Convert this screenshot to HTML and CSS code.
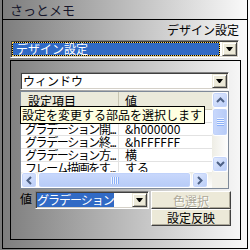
FILE: index.html
```html
<!DOCTYPE html>
<html>

<head>
    <meta charset="utf-8">
    <link rel="stylesheet" href="styles.css">
</head>

<body>
    <div class="window">
        <div class="titlebar">さっとメモ</div>
        <div class="content">
            <div class="heading">デザイン設定</div>
            <div class="combo combo-top">
                <div class="field">デザイン設定</div>
                <div class="drop"><span class="arrow"></span></div>
            </div>

            <div class="panel">
                <div class="combo combo-part">
                    <div class="field">ウィンドウ</div>
                    <div class="drop"><span class="arrow"></span></div>
                </div>

                <div class="listview">
                    <div class="lv-main">
                        <div class="lv-header">
                            <div class="c1">設定項目</div>
                            <div class="c2">値</div>
                        </div>
                        <div class="lv-row">
                            <div class="c1">ウィンドウ背景色</div>
                            <div class="c2">&amp;hFFFFFF</div>
                        </div>
                        <div class="lv-row">
                            <div class="c1">グラデーション開...</div>
                            <div class="c2">&amp;h000000</div>
                        </div>
                        <div class="lv-row">
                            <div class="c1">グラデーション終...</div>
                            <div class="c2">&amp;hFFFFFF</div>
                        </div>
                        <div class="lv-row">
                            <div class="c1">グラデーション方...</div>
                            <div class="c2">横</div>
                        </div>
                        <div class="lv-row">
                            <div class="c1">フレーム描画をす...</div>
                            <div class="c2">する</div>
                        </div>
                    </div>
                    <!-- 縦スクロールバー -->
                    <div class="vscroll">
                        <div class="sb-btn">
                            <svg width="9" height="6" viewBox="0 0 9 6"><path d="M1 5L4.5 1.5L8 5" fill="none" stroke="#4d6185" stroke-width="2"/></svg>
                        </div>
                        <div class="sb-thumb vthumb"><span class="grip-v"></span></div>
                        <div class="sb-space"></div>
                        <div class="sb-btn">
                            <svg width="9" height="6" viewBox="0 0 9 6"><path d="M1 1L4.5 4.5L8 1" fill="none" stroke="#4d6185" stroke-width="2"/></svg>
                        </div>
                    </div>
                    <!-- 横スクロールバー -->
                    <div class="hscroll">
                        <div class="sb-btn">
                            <svg width="6" height="9" viewBox="0 0 6 9"><path d="M5 1L1.5 4.5L5 8" fill="none" stroke="#4d6185" stroke-width="2"/></svg>
                        </div>
                        <div class="sb-thumb hthumb"><span class="grip-h"></span></div>
                        <div class="sb-btn right">
                            <svg width="6" height="9" viewBox="0 0 6 9"><path d="M1 1L4.5 4.5L1 8" fill="none" stroke="#4d6185" stroke-width="2"/></svg>
                        </div>
                    </div>
                    <div class="corner"></div>
                    <div class="tooltip">設定を変更する部品を選択します</div>
                </div>

                <div class="value-row">
                    <span class="value-label">値</span>
                    <div class="combo combo-value">
                        <div class="field"><span class="sel">グラデーション</span></div>
                        <div class="drop"><span class="arrow"></span></div>
                    </div>
                    <div class="buttons">
                        <button class="btn" disabled>色選択</button>
                        <button class="btn btn-apply">設定反映</button>
                    </div>
                </div>
            </div>
        </div>
    </div>
</body>

</html>
```

FILE: styles.css
```css
body {
    margin: 0;
    width: 250px;
    height: 250px;
    overflow: hidden;
    background: linear-gradient(to right, #7c7c7c, #fbfbfb);
    font-family: "Noto Sans CJK JP", sans-serif;
    font-size: 12px;
    color: #000;
}

.window {
    margin-left: 2px;
    width: 246px;
    height: 249px;
    box-sizing: border-box;
    border: 1px solid #000;
    border-top: none;
    display: flex;
    flex-direction: column;
}

.titlebar {
    height: 20px;
    box-sizing: border-box;
    border-bottom: 1px solid #000;
    padding-left: 7px;
    font-size: 13px;
    line-height: 19px;
    color: #16162a;
}

.content {
    flex: 1;
    display: flex;
    flex-direction: column;
    align-items: flex-start;
    padding: 3px 0 0 7px;
}

.heading {
    align-self: flex-end;
    margin-right: 8px;
    line-height: 14px;
}

/* コンボボックス */
.combo {
    display: flex;
    height: 18px;
    box-sizing: border-box;
    padding: 1px;
    border: 1px solid;
    border-color: #808080 #fff #fff #808080;
    box-shadow: inset 1px 1px #404040, inset -1px -1px #d4d0c8;
    background: #fff;
}

.combo .field {
    flex: 1;
    padding-left: 1px;
    line-height: 14px;
    white-space: nowrap;
    overflow: hidden;
}

.combo-top {
    width: 229px;
    margin-top: 3px;
}

.combo-top .field {
    margin-right: 2px;
    padding-left: 3px;
    line-height: 12px;
    color: #fff;
    border: 1px dotted #ffd04a;
    background: linear-gradient(#316ac5, #316ac5) padding-box, #000;
}

.drop {
    width: 15px;
    box-sizing: border-box;
    border: 1px solid;
    border-color: #ece9d8 #404040 #404040 #ece9d8;
    box-shadow: inset 1px 1px #fff, inset -1px -1px #aca899;
    background: #ece9d8;
    display: flex;
    align-items: center;
    justify-content: center;
}

.arrow {
    width: 1px;
    height: 0;
    border-top: 4px solid #000;
    border-left: 3px solid transparent;
    border-right: 3px solid transparent;
}

.panel {
    margin-top: 2px;
    width: 231px;
    height: 180px;
    box-sizing: border-box;
    border: 1px solid #000;
    padding: 11px 0 0 9px;
    display: flex;
    flex-direction: column;
}

.combo-part {
    width: 209px;
}

/* リストビュー */
.listview {
    position: relative;
    margin-top: 1px;
    width: 209px;
    height: 98px;
    box-sizing: border-box;
    border: 1px solid #7f8a99;
    background: #fff;
    display: grid;
    grid-template-columns: 1fr 16px;
    grid-template-rows: 1fr 16px;
}

.lv-main {
    overflow: hidden;
}

.lv-header {
    display: flex;
    height: 18px;
    box-sizing: border-box;
    background: #ebeadb;
    border-bottom: 1px solid #d0cdbc;
    line-height: 17px;
}

.lv-header .c1 {
    width: 98px;
    box-sizing: border-box;
    padding-left: 7px;
    border-right: 1px solid #c7c5b2;
}

.lv-header .c2 {
    padding-left: 6px;
}

.lv-row {
    display: flex;
    height: 12px;
    line-height: 12px;
    border-bottom: 1px solid #e2e2e2;
}

.lv-row .c1 {
    width: 98px;
    box-sizing: border-box;
    padding-left: 4px;
    border-right: 1px solid #e2e2e2;
    white-space: nowrap;
    overflow: hidden;
    letter-spacing: -1.4px;
}

.lv-row .c2 {
    padding-left: 6px;
    white-space: nowrap;
}

.tooltip {
    position: absolute;
    left: -1px;
    top: 14px;
    width: 185px;
    height: 18px;
    box-sizing: border-box;
    border: 1px solid #000;
    background: #ffffe1;
    padding-left: 1px;
    line-height: 16px;
    white-space: nowrap;
}

/* スクロールバー */
.vscroll {
    display: flex;
    flex-direction: column;
    background: linear-gradient(to right, #eeede5, #fefefe);
}

.hscroll {
    display: flex;
    background: linear-gradient(#eeede5, #fefefe);
    padding-right: 4px;
}

.sb-btn {
    width: 16px;
    height: 16px;
    box-sizing: border-box;
    border: 1px solid #fff;
    border-radius: 3px;
    background: linear-gradient(135deg, #e3ebfe, #b8ccf7);
    box-shadow: inset 0 0 0 1px #c5d5fb;
    display: flex;
    align-items: center;
    justify-content: center;
}

.sb-btn.right {
    margin-left: 1px;
}

.sb-thumb {
    box-sizing: border-box;
    border: 1px solid #fff;
    border-radius: 3px;
    box-shadow: inset 0 0 0 1px #c0d2fa;
    display: flex;
    align-items: center;
    justify-content: center;
}

.vthumb {
    height: 28px;
    background: linear-gradient(to right, #c9d8fc, #b6cbf7);
}

.hthumb {
    margin-left: 1px;
    width: 153px;
    background: linear-gradient(#c9d8fc, #b6cbf7);
}

.sb-space {
    flex: 1;
}

.grip-v {
    width: 7px;
    height: 8px;
    background: repeating-linear-gradient(#eef4fe 0 1px, #8cb0f8 1px 2px);
}

.grip-h {
    width: 8px;
    height: 7px;
    background: repeating-linear-gradient(to right, #eef4fe 0 1px, #8cb0f8 1px 2px);
}

.corner {
    background: #f2f1ea;
}

/* 値の行 */
.value-row {
    display: flex;
    margin-top: 2px;
}

.value-label {
    width: 12px;
    margin-right: 3px;
    line-height: 16px;
}

.combo-value {
    width: 114px;
}

.combo-value .field {
    padding-left: 0;
}

.sel {
    background: #316ac5;
    color: #fff;
    letter-spacing: -1px;
}

.buttons {
    margin-left: 2px;
    width: 80px;
    display: flex;
    flex-direction: column;
}

.btn {
    height: 18px;
    margin: 0;
    padding: 0;
    box-sizing: border-box;
    border: 1px solid;
    border-color: #fff #404040 #404040 #fff;
    box-shadow: inset -1px -1px #aca899;
    background: #ece9d8;
    font-family: inherit;
    font-size: 12px;
    line-height: 15px;
    color: #000;
}

.btn:disabled {
    color: #aca899;
    text-shadow: 1px 1px #fff;
}

.btn-apply {
    height: 17px;
}
```
